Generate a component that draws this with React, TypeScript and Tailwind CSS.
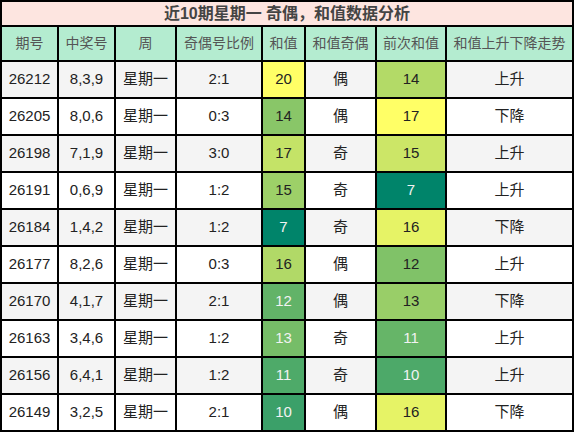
import React from "react";

interface Row {
  issue: string;
  nums: string;
  ratio: string;
  sum: number;
  parity: string;
  prev: number;
  trend: string;
}

const rows: Row[] = [
  { issue: "26212", nums: "8,3,9", ratio: "2:1", sum: 20, parity: "偶", prev: 14, trend: "上升" },
  { issue: "26205", nums: "8,0,6", ratio: "0:3", sum: 14, parity: "偶", prev: 17, trend: "下降" },
  { issue: "26198", nums: "7,1,9", ratio: "3:0", sum: 17, parity: "奇", prev: 15, trend: "上升" },
  { issue: "26191", nums: "0,6,9", ratio: "1:2", sum: 15, parity: "奇", prev: 7, trend: "上升" },
  { issue: "26184", nums: "1,4,2", ratio: "1:2", sum: 7, parity: "奇", prev: 16, trend: "下降" },
  { issue: "26177", nums: "8,2,6", ratio: "0:3", sum: 16, parity: "偶", prev: 12, trend: "上升" },
  { issue: "26170", nums: "4,1,7", ratio: "2:1", sum: 12, parity: "偶", prev: 13, trend: "下降" },
  { issue: "26163", nums: "3,4,6", ratio: "1:2", sum: 13, parity: "奇", prev: 11, trend: "上升" },
  { issue: "26156", nums: "6,4,1", ratio: "1:2", sum: 11, parity: "奇", prev: 10, trend: "上升" },
  { issue: "26149", nums: "3,2,5", ratio: "2:1", sum: 10, parity: "偶", prev: 16, trend: "下降" },
];

const headers = ["期号", "中奖号", "周", "奇偶号比例", "和值", "和值奇偶", "前次和值", "和值上升下降走势"];

// green -> yellow colour scale, per column
function scale(v: number, min: number, max: number) {
  const f = (v - min) / (max - min);
  const r = Math.round(0 + 255 * f);
  const g = Math.round(132 + (255 - 132) * f);
  const b = Math.round(106 - 4 * f);
  return { background: `rgb(${r},${g},${b})`, color: f < 0.5 ? "#f2f2f2" : "#222" };
}

const cell = "flex items-center justify-center border-r-2 border-b-2 border-black";

export default function App() {
  const sums = rows.map((r) => r.sum);
  const prevs = rows.map((r) => r.prev);
  const sMin = Math.min(...sums), sMax = Math.max(...sums);
  const pMin = Math.min(...prevs), pMax = Math.max(...prevs);

  return (
    <div
      className="w-[574px] h-[432px] bg-white"
      style={{ fontFamily: '"Liberation Sans", "Noto Sans CJK SC", sans-serif' }}
    >
      <div className="grid grid-cols-[57px_57px_61px_86px_43px_71px_70px_127px] border-l-2 border-t-2 border-black">
        <div className={`${cell} col-span-8 h-[25px] bg-[#fde5e0] text-[16px] font-bold text-[#444]`}>
          近10期星期一 奇偶，和值数据分析
        </div>
        {headers.map((h) => (
          <div key={h} className={`${cell} h-[35px] bg-[#b4ecd0] text-[14px] text-[#555]`}>
            {h}
          </div>
        ))}
        {rows.map((r, i) => {
          const bg = i % 2 === 0 ? "bg-[#f4f4f4]" : "bg-white";
          return (
            <React.Fragment key={r.issue}>
              <div className={`${cell} ${bg} h-[37px] text-[15px] text-[#222]`}>{r.issue}</div>
              <div className={`${cell} ${bg} h-[37px] text-[15px] text-[#222]`}>{r.nums}</div>
              <div className={`${cell} ${bg} h-[37px] text-[15px] text-[#222]`}>星期一</div>
              <div className={`${cell} ${bg} h-[37px] text-[15px] text-[#222]`}>{r.ratio}</div>
              <div className={`${cell} h-[37px] text-[15px]`} style={scale(r.sum, sMin, sMax)}>
                {r.sum}
              </div>
              <div className={`${cell} ${bg} h-[37px] text-[15px] text-[#222]`}>{r.parity}</div>
              <div className={`${cell} h-[37px] text-[15px]`} style={scale(r.prev, pMin, pMax)}>
                {r.prev}
              </div>
              <div className={`${cell} ${bg} h-[37px] text-[15px] text-[#222]`}>{r.trend}</div>
            </React.Fragment>
          );
        })}
      </div>
    </div>
  );
}
